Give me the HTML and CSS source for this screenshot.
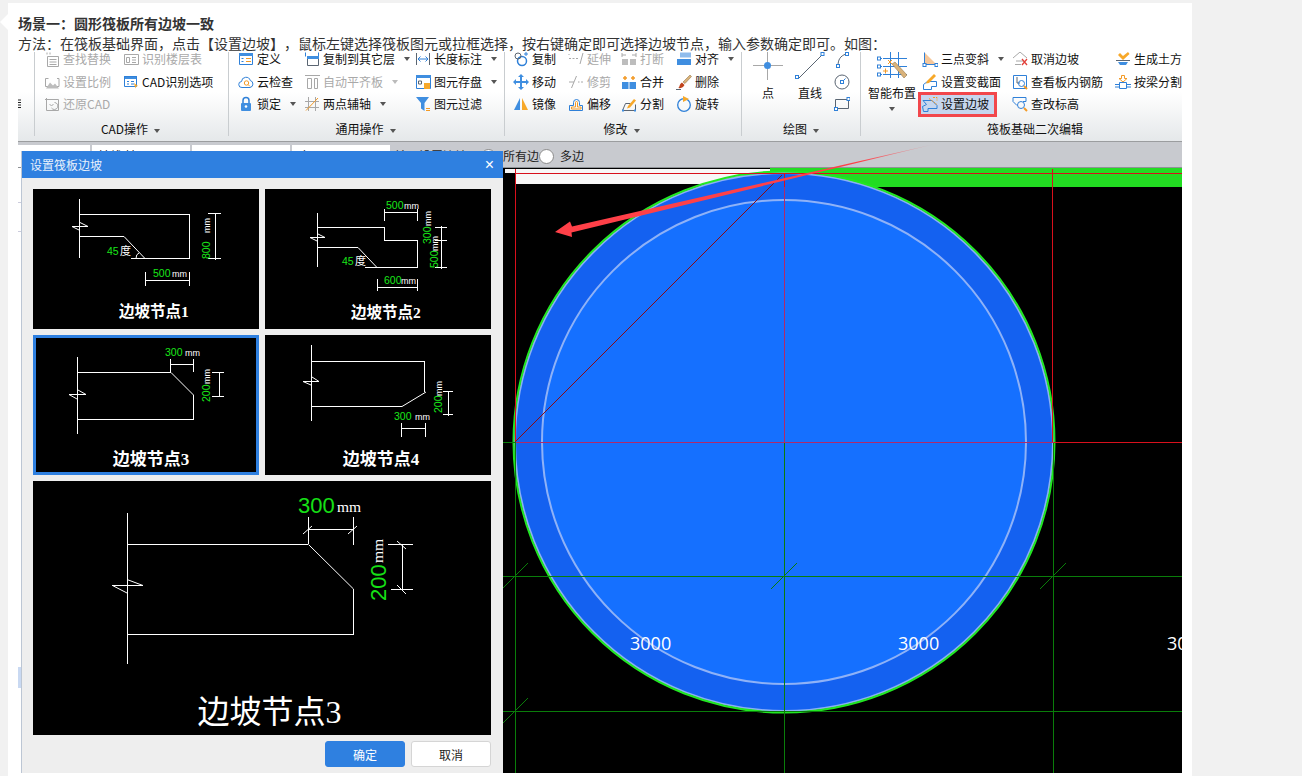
FILE: index.html
```html
<!DOCTYPE html>
<html lang="zh-CN">
<head>
<meta charset="utf-8">
<title>设置筏板边坡</title>
<link rel="stylesheet" href="styles.css">
</head>
<body>
<main class="card">
  <h1 class="title">场景一：圆形筏板所有边坡一致</h1>
  <p class="para">方法：在筏板基础界面，点击【设置边坡】，鼠标左键选择筏板图元或拉框选择，按右键确定即可选择边坡节点，输入参数确定即可。如图：</p>
  <div class="shot">
    <section class="ribbon">
      <div class="group stub"><svg class="stubicon" viewBox="0 0 4 10"><path d="M0 1h3M0 3.500h3M0 6h3M0 8.500h3"/></svg></div>

      <div class="group cad">
        <div class="rows">
          <div class="it off"><svg class="ic" viewBox="0 0 16 16"><path class="gr" d="M3.500 5.500h11v10h-11zM5.500 8.500h7M5.500 11h7M5.500 13.500h7M3 1.500v2M6 1.500v2"/></svg>查找替换</div>
          <div class="it off"><svg class="ic" viewBox="0 0 16 16"><path class="gr" d="M1.500 4.500h3M1.500 12.500h3M13 4.500h2M13 12.500h2M1.500 4.500v8M15 4.500v8"/><path class="gf" d="M2 14.500l4-6 3 3 2-2 4 5z"/></svg>设置比例</div>
          <div class="it off"><svg class="ic" viewBox="0 0 16 16"><path class="gr" d="M2.500 3.500h12v11h-12zM1 3.500h3M2.500 2v3M10.500 6.500a3.500 3.500 0 1 1-3 5.500M5.500 8l2 2 2-2"/></svg>还原CAD</div>
          <div class="it off"><svg class="ic" viewBox="0 0 16 16"><path class="gr" d="M1.500 3.500h14v10h-14zM9 6.500h4M9 9h4M9 11.500h4M3.500 6.500h3v5h-3z"/></svg>识别楼层表</div>
          <div class="it"><svg class="ic" viewBox="0 0 16 16"><rect class="bf" x="1" y="2" width="13" height="3"/><path class="bl" d="M1.500 2.500h12v10h-12z"/><path class="bl" d="M4 7.500h2M4 10h2M8 7.500h3M8 10h3"/><path class="of" d="M11 9l4 3-2 .6-.7 2z"/></svg>CAD识别选项</div>
        </div>
        <div class="glabel">CAD操作<i class="caret"></i></div>
      </div>

      <div class="group com">
        <div class="rows">
          <div class="it"><svg class="ic" viewBox="0 0 16 16"><path class="bl" d="M1.500 2.500h13v11h-13z"/><rect class="bf" x="1" y="2" width="14" height="3"/><path class="or" d="M8 7.500h5M8 10.500h5"/><path class="bl" d="M3.500 7.500h2M3.500 10.500h2"/></svg>定义</div>
          <div class="it"><svg class="ic" viewBox="0 0 16 16"><path class="bl" d="M4 13.500a3 3 0 0 1-.5-6 4.500 4.500 0 0 1 8.800-1 3.600 3.600 0 0 1-.3 7z"/><circle class="or" cx="8.500" cy="9" r="2.200"/><path class="or" d="M10 10.500l1.800 1.800"/></svg>云检查</div>
          <div class="it"><svg class="ic" viewBox="0 0 16 16"><path class="bl" d="M5 7V4.500a3 3 0 0 1 6 0V7" stroke-width="1.500"/><rect class="bf" x="3" y="7" width="10" height="8" rx="1"/><circle class="wf" cx="8" cy="10.500" r="1.300"/></svg>锁定<i class="caret"></i></div>
          <div class="it"><svg class="ic" viewBox="0 0 16 16"><path class="bl" d="M1.500 1.500v4M14.500 1.500v4"/><path class="da" d="M3.500 5.500h11v9h-11z"/><rect class="bf" x="3" y="5" width="12" height="3"/></svg>复制到其它层<i class="caret"></i></div>
          <div class="it off"><svg class="ic" viewBox="0 0 16 16"><path class="gr" d="M1 1.500h15M3.500 4.500h4v10h-4zM10.500 4.500h3v10h-3z"/></svg>自动平齐板<i class="caret"></i></div>
          <div class="it"><svg class="ic" viewBox="0 0 16 16"><path class="gr" d="M4.500 1v14M11.500 1v14M1 5.500h14M1 11.500h14"/><path class="or" d="M2 14.500L14 2"/></svg>两点辅轴<i class="caret"></i></div>
          <div class="it"><svg class="ic" viewBox="0 0 16 16"><path class="da" d="M1.500 2v12M14.500 2v12"/><path class="bl" d="M3 8h10M5.500 5.500L3 8l2.500 2.500M10.500 5.500L13 8l-2.500 2.500"/></svg>长度标注<i class="caret"></i></div>
          <div class="it"><svg class="ic" viewBox="0 0 16 16"><path class="bl" d="M1.500 1.500h14v13h-14z"/><rect class="bf" x="1" y="1" width="15" height="3"/><path class="da" d="M3.500 7h3v3h-3z"/><rect class="of" x="9" y="9" width="6" height="6"/></svg>图元存盘<i class="caret"></i></div>
          <div class="it"><svg class="ic" viewBox="0 0 16 16"><path class="bf" d="M1 1h13L9.500 7v8L6 12.500V7z"/><path class="or" d="M11 12.500h4M11 14.500h4"/></svg>图元过滤</div>
        </div>
        <div class="glabel">通用操作<i class="caret"></i></div>
      </div>

      <div class="group mod">
        <div class="rows">
          <div class="it"><svg class="ic" viewBox="0 0 16 16"><circle class="bl" cx="9" cy="10" r="4.500" stroke-width="1.500"/><circle class="da" cx="5" cy="5" r="3"/><path class="bl" d="M13 1v4M11 3h4"/></svg>复制</div>
          <div class="it"><svg class="ic" viewBox="0 0 16 16"><path class="bf" d="M8 0l3 3H9v4h4V5l3 3-3 3V9H9v4h2l-3 3-3-3h2V9H3v2L0 8l3-3v2h4V3H5z"/></svg>移动</div>
          <div class="it"><svg class="ic" viewBox="0 0 16 16"><path class="bf" d="M7 2v12H1z"/><path class="of" d="M9 2v12h6z"/></svg>镜像</div>
          <div class="it off"><svg class="ic" viewBox="0 0 16 16"><path class="gr" d="M1 7.500h2M4.500 7.500h2M8 7.500h2M12 13L15 2M1 3v1"/></svg>延伸</div>
          <div class="it off"><svg class="ic" viewBox="0 0 16 16"><path class="gr" d="M1 8h5M10 8h1.500M13 8h2M3.500 14L8.500 2"/></svg>修剪</div>
          <div class="it"><svg class="ic" viewBox="0 0 16 16"><path class="bl" d="M1.500 14.500v-5h4v-3a3 3 0 0 1 6 0v3h3v5z"/><path class="or" d="M3.500 13v-2h4V6.500a1 1 0 0 1 2 0V11h3.500v2z"/></svg>偏移</div>
          <div class="it off"><svg class="ic" viewBox="0 0 16 16"><rect class="gf" x="1" y="8" width="6" height="6"/><rect class="gf" x="9" y="8" width="6" height="6"/><path class="gr" d="M1 4h4M1 2v4M15 4h-4M15 2v4"/></svg>打断</div>
          <div class="it"><svg class="ic" viewBox="0 0 16 16"><rect class="bf" x="1" y="8" width="6.500" height="7"/><rect class="bf" x="8.500" y="8" width="6.500" height="7"/><path class="or" d="M4 2v4M2 4h4M12 2v4M10 4h4" stroke-width="1.500"/></svg>合并</div>
          <div class="it"><svg class="ic" viewBox="0 0 16 16"><path class="da" d="M1.500 14.500l3-7h5M1.500 14.500h13v-6"/><path class="of" d="M7 10l6-7 2 1.500-6 7-3 1z"/><rect class="bf" x="1" y="13.500" width="2" height="2"/><rect class="bf" x="13" y="13.500" width="2" height="2"/></svg>分割</div>
          <div class="it"><svg class="ic" viewBox="0 0 16 16"><rect class="bf" x="1" y="8" width="14" height="6"/><rect class="lf" x="4" y="1.500" width="11" height="5"/></svg>对齐<i class="caret"></i></div>
          <div class="it"><svg class="ic" viewBox="0 0 16 16"><path class="tan" d="M7 8L14 1l1.500 1.500L9 9.500z"/><path class="rdf" d="M2 14c2-.5 1-4 4-5.500L8.500 11C7 14 4 14.500 2 14z"/><path class="da" d="M0 15.500h5"/></svg>删除</div>
          <div class="it"><svg class="ic" viewBox="0 0 16 16"><circle class="bl" cx="8" cy="9" r="6.300" stroke-width="1.300"/><path class="of" d="M7 0l6 3-6 3z"/></svg>旋转</div>
        </div>
        <div class="glabel">修改<i class="caret"></i></div>
      </div>

      <div class="group draw">
        <div class="flexbody">
          <div class="big pt"><svg class="bigic" viewBox="0 0 30 30"><path class="gr" d="M0 13.500h30M14.500 0v28"/><circle class="bf" cx="14.500" cy="13.500" r="3.500"/></svg><span>点</span></div>
          <div class="big lnb"><svg class="bigic" viewBox="0 0 30 30"><path class="da" d="M3 27L27 3"/><rect class="wb" x="0.500" y="23.500" width="3" height="3"/><rect class="wb" x="26" y="0.500" width="3" height="3"/></svg><span>直线</span></div>
          <div class="smalls">
            <svg class="ic" viewBox="0 0 16 16"><path class="da" d="M4 14C4 8 6 4 12 2"/><rect class="wb" x="2.500" y="12.500" width="3" height="3"/><rect class="wb" x="11.500" y="0.500" width="3" height="3"/></svg>
            <svg class="ic" viewBox="0 0 16 16"><circle class="da" cx="8" cy="8" r="7"/><rect class="wb" x="6.500" y="6.500" width="3" height="3"/><path class="bl" d="M9.500 6.500l2-2"/></svg>
            <svg class="ic" viewBox="0 0 16 16"><path class="da" d="M1.500 4.500h13v9h-13z"/><rect class="wb" x="0.500" y="12.500" width="3" height="3"/><rect class="wb" x="13" y="2.500" width="3" height="3"/></svg>
          </div>
        </div>
        <div class="glabel">绘图<i class="caret"></i></div>
      </div>

      <div class="group raft">
        <div class="flexbody">
          <div class="big smart"><svg class="bigic" viewBox="0 0 30 30"><path class="bl" d="M6 6.500h24M6 14.500h24M6 22.500h24M13.500 0v26M21.500 0v26M3 6.500h2M3 14.500h2M3 22.500h2"/><rect class="wb" x="0.500" y="5" width="3" height="3"/><rect class="wb" x="0.500" y="13" width="3" height="3"/><rect class="wb" x="0.500" y="21" width="3" height="3"/><path class="or" d="M11 8l4 4M15 8l-4 4M6 19h5M8.500 16.500v5"/><path class="tan" d="M15 12l3-2 12 13-3 3z"/></svg><span>智能布置</span><i class="caret solo"></i></div>
          <div class="rows r3">
            <div class="it"><svg class="ic" viewBox="0 0 16 16"><path class="lof" d="M2.500 1.500v12h12z"/><path class="bl" d="M2.500 1.500v12h12"/><rect class="wb" x="1" y="12.500" width="3" height="3"/><rect class="wb" x="13" y="12.500" width="3" height="3"/></svg>三点变斜<i class="caret"></i></div>
            <div class="it"><svg class="ic" viewBox="0 0 16 16"><path class="bl" d="M1.500 15.500v-5l4-3h9v5h-5v3z"/><path class="of" d="M5 7L12 0l2 2-7 7-3 .5z"/></svg>设置变截面</div>
            <div class="it hl"><svg class="ic" viewBox="0 0 16 16"><path class="bl" d="M1 4.500h9l5 5v3H6v3H1.500l-1-5 4-2z"/><path class="or" d="M7 2.500l8 6M11 1.500h4v3" stroke-dasharray="2 1"/></svg>设置边坡</div>
            <div class="it"><svg class="ic" viewBox="0 0 16 16"><path class="gr" d="M1 7l7-6 7 6M4 10h8M3 13.500h6"/><path class="rd" d="M10 8l5 6M15 8l-5 6" stroke-width="1.300"/></svg>取消边坡</div>
            <div class="it"><svg class="ic" viewBox="0 0 16 16"><path class="bl" d="M1.500 1.500h13v13h-13z"/><path class="da" d="M5 3v6h3"/><circle class="bl" cx="9.500" cy="9.500" r="3"/><path class="or" d="M12 12l3 3" stroke-width="2"/></svg>查看板内钢筋</div>
            <div class="it"><svg class="ic" viewBox="0 0 16 16"><path class="bl" d="M1 1.500h13v4h-3M1 1.500v4l4 4"/><circle class="bl" cx="9" cy="9" r="3.500"/><path class="or" d="M12 12l3 3" stroke-width="2"/></svg>查改标高</div>
            <div class="it"><svg class="ic" viewBox="0 0 16 16"><path class="of" d="M3 4l2-2 3 3 5-4 1.500 2L8 9z"/><path class="da" d="M1 9.500h14"/><path class="bf" d="M3 11h10l-2 3H5z"/></svg>生成土方</div>
            <div class="it"><svg class="ic" viewBox="0 0 16 16"><path class="or" d="M6.500 1.500h3v3H12l-4 3.500-4-3.500h2.500z"/><path class="bl" d="M4.500 8.500h7v6h-7zM0 10.500h4.500M11.500 10.500H16M0 13h4.500M11.500 13H16"/></svg>按梁分割</div>
          </div>
        </div>
        <div class="glabel raftlabel">筏板基础二次编辑</div>
      </div>
    </section>

    <section class="toolbar">
      <span class="field first"></span>
      <span class="field">轴线 轴网</span>
      <span class="field"></span>
      <span class="field">底层</span>
      <span class="tbtext hint">输入设置边坡</span>
      <i class="radio ra"></i>
      <span class="tbtext all">所有边</span>
      <i class="radio rb"></i>
      <span class="tbtext many">多边</span>
    </section>

    <section class="work">
      <aside class="side">
        <i class="mark m1"></i>
        <i class="mark m2"></i>
        <i class="mark m3"></i>
      </aside>
      <svg class="canvas" viewBox="503 168 679 605">
        <rect class="c-white" x="505" y="169" width="265" height="4"/>
        <rect class="c-white" x="515" y="173" width="268" height="11"/>
        <rect class="c-green" x="770" y="168" width="412" height="5"/>
        <rect class="c-green" x="783" y="173" width="399" height="14"/>
        <circle class="c-outer" cx="784" cy="442" r="269"/>
        <circle class="c-rim" cx="784" cy="442" r="270.500"/>
        <circle class="c-inner" cx="784" cy="442" r="242"/>
        <path class="c-grid" d="M503 576.500H1182M503 711.500H1182M515.500 442V773M784.500 442V773M1053.500 442V773M503 442.500H515M502 589l26-26M771 589l26-26M1040 589l26-26M502 724l26-26"/>
        <path class="c-red" d="M515.500 169V442M1052.500 169V442M515 173.500H1182M1054 442.500H1182M784.500 173V187"/>
        <path class="c-mix" d="M516 442.500H1054M784.500 187V442"/>
        <path class="c-dia" d="M515 442L782 175"/>
        <text class="c-num" x="630" y="650">3000</text>
        <text class="c-num" x="898" y="650">3000</text>
        <text class="c-num" x="1167" y="650">3000</text>
      </svg>
    </section>

    <svg class="arrow" viewBox="18 52 1164 721">
      <defs>
        <linearGradient id="fade" gradientUnits="userSpaceOnUse" x1="935" y1="144" x2="860" y2="161">
          <stop offset="0" stop-color="#ff4048" stop-opacity="0.100"/>
          <stop offset="1" stop-color="#ff4048"/>
        </linearGradient>
      </defs>
      <path fill="url(#fade)" d="M935 144L572 226.500 570 221.500 555 232 572 237 571.500 232.500Z"/>
    </svg>

    <div class="dialog">
      <header class="dhead"><span>设置筏板边坡</span><b class="close">×</b></header>
      <div class="dbody">
        <div class="thumbs">
          <div class="thumb">
            <svg viewBox="0 0 226 140">
              <path class="ln" d="M46.500 10V69M46 25.500H157M156.500 25V70M98 69.500H157M46 47.500H91M175 24.500H188M175 69.500H188M182.500 24V71M112.500 83V97M156.500 83V97M112 91.500H157M39 37.500H55"/>
              <path class="ln" d="M91 47.500L112 69.500M39 37.500L46 41M47 33.500L55 37.500M103 69.500Q103 65 106 64"/>
              <text class="tg" x="74" y="66">45</text><text class="tw cjk" x="87" y="66">度</text>
              <text class="tg" x="120" y="88">500</text><text class="tw" x="139" y="88">mm</text>
              <text class="tg" transform="translate(176.500 70) rotate(-90)" x="0" y="0">800</text>
              <text class="tw" transform="translate(176.500 44) rotate(-90)" x="0" y="0">mm</text>
              <text class="cap" x="121" y="128">边坡节点1</text>
            </svg>
          </div>
          <div class="thumb">
            <svg viewBox="0 0 226 140">
              <path class="ln" d="M52.500 24V78M52 38.500H119M119.500 38V51M119 51.500H153M152.500 51V79M100 78.500H153M52 58.500H93M119.500 20V32M152.500 20V32M119 23.500H153M170 38.500H182M170 51.500H182M170 78.500H182M176.500 37V80M112.500 90V102M152.500 90V102M112 98.500H153M45 48.500H60"/>
              <path class="ln" d="M93 58.500L112 78.500M45 48.500L52 52M53 45L60 48.500"/>
              <text class="tg" x="121" y="20">500</text><text class="tw" x="139" y="20">mm</text>
              <text class="tg" x="119" y="95">600</text><text class="tw" x="136" y="95">mm</text>
              <text class="tg" transform="translate(165.500 55) rotate(-90)" x="0" y="0">300</text>
              <text class="tw" transform="translate(165.500 37) rotate(-90)" x="0" y="0">mm</text>
              <text class="tg" transform="translate(172.500 79) rotate(-90)" x="0" y="0">500</text>
              <text class="tw" transform="translate(172.500 62) rotate(-90)" x="0" y="0">mm</text>
              <text class="tg" x="77" y="76">45</text><text class="tw cjk" x="90" y="76">度</text>
              <text class="cap" x="121" y="129">边坡节点2</text>
            </svg>
          </div>
          <div class="thumb sel">
            <svg viewBox="0 0 226 140">
              <path class="ln" d="M44.500 22V99M44 37.500H138M160.500 60V85M44 84.500H161M137.500 24V37M160.500 24V37M137 29.500H161M179 37.500H191M179 61.500H191M186.500 37V62M36 59.500H53"/>
              <path class="ln" d="M138 37.500L160.500 60M36 59.500L44 64M45 55L53 59.500"/>
              <text class="tg" x="132" y="21">300</text><text class="tw" x="152" y="21">mm</text>
              <text class="tg" transform="translate(177 67) rotate(-90)" x="0" y="0">200</text>
              <text class="tw" transform="translate(177 49) rotate(-90)" x="0" y="0">mm</text>
              <text class="cap large" x="118" y="130">边坡节点3</text>
            </svg>
          </div>
          <div class="thumb">
            <svg viewBox="0 0 226 140">
              <path class="ln" d="M46.500 10V86M46 26.500H160M159.500 26V57M46 71.500H137M178 56.500H188M178 79.500H188M183.500 56V81M136.500 88V102M160.500 88V102M136 93.500H161M38 46.500H54"/>
              <path class="ln" d="M137 71.500L161 57M38 46.500L46 50M47 42L54 46.500"/>
              <text class="tg" x="129" y="85">300</text><text class="tw" x="150" y="85">mm</text>
              <text class="tg" transform="translate(177 78) rotate(-90)" x="0" y="0">200</text>
              <text class="tw" transform="translate(177 61) rotate(-90)" x="0" y="0">mm</text>
              <text class="cap large" x="116" y="130">边坡节点4</text>
            </svg>
          </div>
        </div>
        <div class="preview">
          <svg viewBox="0 0 458 254">
            <path class="ln" d="M94.500 32V183M94 63.500H275M320.500 108V154M94 153.500H321M275.500 36V63M320.500 36V64M275 48.500H321M355 63.500H380M358 108.500H380M369.500 63V109M79 104.500H110"/>
            <path class="ln" d="M275.500 63.500L320.500 108M79.500 104.500L94 112M94 98.500L110 104.500M270 53L279 45M315 53L324 45M364 60L373 68M364 104L373 113"/>
            <text class="pg" x="265" y="32">300</text>
            <text class="pw" x="304" y="31">mm</text>
            <text class="pg" transform="translate(353 120) rotate(-90)" x="0" y="0">200</text>
            <text class="pw" transform="translate(350 82) rotate(-90)" x="0" y="0">mm</text>
            <text class="pcap" x="236.500" y="242">边坡节点3</text>
          </svg>
        </div>
        <div class="dfoot">
          <button class="btn primary" type="button">确定</button>
          <button class="btn" type="button">取消</button>
        </div>
      </div>
    </div>
  </div>
</main>
</body>
</html>
```

FILE: styles.css
```css
html, body { margin: 0; padding: 0; }
body {
  background: #f1f1f1;
  width: 1302px;
  height: 776px;
  overflow: hidden;
  font-family: "Noto Sans CJK SC", "Liberation Sans", sans-serif;
  color: #222;
  text-spacing-trim: space-all;
  font-feature-settings: "chws" 0, "palt" 0;
}
.card {
  position: relative;
  margin: 3px 0 0 8px;
  width: 1184px;
  height: 773px;
  box-sizing: border-box;
  padding: 10px 10px 0;
  background: #fff;
}
.card::before {
  content: "";
  position: absolute;
  left: -8px;
  top: 11px;
  width: 8px;
  height: 16px;
  background: #fff;
  clip-path: polygon(100% 0, 0 50%, 100% 100%);
}
.title { margin: 0; font-size: 14px; line-height: 20px; font-weight: 700; color: #333; }
.para { margin: 1px 0 0; font-size: 14px; line-height: 18px; color: #333; white-space: nowrap; }

.shot { position: relative; width: 1164px; height: 721px; overflow: hidden; background: #fff; }

/* ribbon */
.ribbon {
  display: flex;
  height: 89px;
  overflow: hidden;
  box-sizing: border-box;
  background: linear-gradient(#fff 0, #fff 45%, #e5e8ea 100%);
  font-size: 12px;
  color: #111;
}
.group { position: relative; flex: none; box-sizing: border-box; }
.group::before {
  content: "";
  position: absolute;
  left: 0;
  top: 0;
  bottom: 5px;
  width: 1px;
  background: #c9cdd0;
}
.stub::before { display: none; }
.stub { width: 16px; }
.stubicon { position: absolute; left: 0; top: 47px; width: 4px; height: 10px; }
.stubicon path { stroke: #222; fill: none; }
.cad { width: 194px; padding-left: 10px; }
.com { width: 276px; padding-left: 10px; }
.mod { width: 237px; padding-left: 9px; }
.draw { width: 119px; padding-left: 12px; }
.raft { width: 322px; padding-left: 8px; }

.rows {
  display: grid;
  grid-auto-flow: column;
  grid-template-rows: repeat(3, 22.5px);
  height: 68px;
  margin-top: -4px;
}
.cad .rows { grid-template-columns: 79px 1fr; }
.com .rows { grid-template-columns: 66px 111px 1fr; }
.mod .rows { grid-template-columns: 55px 53px 55px 1fr; }
.r3 { grid-template-columns: 90px 103px 1fr; margin-left: 6px; }
.flexbody { display: flex; height: 64px; }

.it { display: flex; align-items: center; gap: 3px; white-space: nowrap; line-height: 16px; }
.it.off { color: #a9a9a9; }
.ic { flex: none; width: 16px; height: 16px; }
.caret {
  display: inline-block;
  flex: none;
  width: 0;
  height: 0;
  margin-left: 6px;
  border: 3.5px solid transparent;
  border-top: 4px solid #555;
  border-bottom: 0;
  vertical-align: middle;
}
.it.off .caret { border-top-color: #bbb; }
.hl {
  justify-self: start;
  align-self: center;
  height: 19px;
  width: 73px;
  background: #c6d6ee;
  outline: 3px solid #f2474c;
  outline-offset: 0;
  margin-left: -1px;
  padding-left: 1px;
  box-sizing: border-box;
}
.glabel { margin-top: 6px; height: 14px; line-height: 14px; text-align: center; font-size: 12px; color: #111; }
.cad .glabel, .com .glabel, .mod .glabel, .draw .glabel { margin-left: -11px; }
.raftlabel { padding-left: 20px; }

.big { flex: none; display: flex; flex-direction: column; align-items: center; }
.bigic { width: 30px; height: 30px; flex: none; }
.big span { margin-top: 3px; line-height: 16px; white-space: nowrap; }
.pt, .lnb { width: 30px; }
.lnb { margin-left: 12px; }
.smart { width: 48px; }
.caret.solo { margin: 6px 0 0; }
.smalls { margin: 0 0 0 9px; display: flex; flex-direction: column; gap: 5.500px; }

/* icon paints */
.ic path, .ic circle, .ic rect, .bigic path, .bigic circle, .bigic rect { fill: none; }
.ic .bl, .bigic .bl { stroke: #2f80d8; }
.ic .or, .bigic .or { stroke: #f39a26; }
.ic .gr, .bigic .gr { stroke: #a8a8a8; }
.ic .da, .bigic .da { stroke: #5a6572; }
.ic .rd { stroke: #e2403a; }
.ic .bf, .bigic .bf { fill: #3f8ee0; }
.ic .lf { fill: #8fbcec; }
.ic .of { fill: #f7a829; }
.ic .lof { fill: #f6c79a; }
.ic .gf { fill: #bdbdbd; }
.ic .wf { fill: #fff; }
.ic .tan, .bigic .tan { fill: #d9b27a; stroke: #8a6a3a; stroke-width: 0.500; }
.ic .rdf { fill: #c0431c; }
.ic .wb, .bigic .wb { fill: #fff; stroke: #2f80d8; }

/* toolbar */
.toolbar {
  position: relative;
  display: flex;
  align-items: flex-start;
  height: 27px;
  box-sizing: border-box;
  padding-top: 3px;
  background: #c8cacf;
  border-top: 1px solid #9b9d9f;
  border-bottom: 1px solid #8f9296;
  font-size: 12px;
  color: #222;
}
.field {
  flex: none;
  width: 98px;
  height: 22px;
  margin-right: 2px;
  padding-left: 6px;
  box-sizing: border-box;
  background: #fff;
  line-height: 22px;
}
.field.first { width: 72px; }
.tbtext { flex: none; line-height: 22px; white-space: nowrap; color: #222; }
.hint { margin-left: 3px; width: 83px; }
.radio {
  flex: none;
  width: 13px;
  height: 13px;
  margin-top: 4px;
  border: 1px solid #8b8b8b;
  border-radius: 50%;
  background: #fff;
}
.ra { margin-left: 3px; }
.all { margin-left: 7px; width: 36px; }
.many { margin-left: 6px; }

/* work area */
.work { display: flex; height: 605px; }
.side { position: relative; flex: none; width: 485px; background: #fff; }
.mark { position: absolute; left: 0; width: 3px; }
.m1 { top: 34px; height: 1px; background: #ccd; }
.m2 { top: 63px; height: 1px; background: #ccd; }
.m3 { top: 499px; height: 21px; background: #c9d9f2; }
.canvas { flex: none; display: block; width: 679px; height: 605px; background: #000; }
.c-white { fill: #f7f7f7; }
.c-green { fill: #22dc22; }
.c-outer { fill: #1461f0; stroke: #8ab0f5; stroke-width: 2; }
.c-rim { fill: none; stroke: #22e622; stroke-width: 2; }
.c-inner { fill: #1570ff; stroke: #8fb2f7; stroke-width: 2; }
.c-grid { fill: none; stroke: #0a7d0a; stroke-width: 1; }
.c-red { fill: none; stroke: #d8101c; stroke-width: 1; }
.c-mix { fill: none; stroke: #b02a6a; stroke-width: 1; }
.c-dia { fill: none; stroke: #8c0a12; stroke-width: 1; }
.c-num { fill: #fff; font-family: "Open Sans", sans-serif; font-size: 18px; }
.arrow { position: absolute; left: 0; top: 0; width: 1164px; height: 721px; pointer-events: none; }

/* dialog */
.dialog {
  position: absolute;
  left: 3px;
  top: 99px;
  width: 482px;
  height: 622px;
  box-sizing: border-box;
  border-left: 1px solid #bcc6d4;
  background: #eee;
  display: flex;
  flex-direction: column;
}
.dhead {
  display: flex;
  flex: none;
  align-items: center;
  justify-content: space-between;
  height: 27px;
  padding: 0 9px 0 8px;
  background: #2f80e0;
  color: #e9f1fc;
  font-size: 12px;
}
.close { font-size: 16px; font-weight: 400; font-family: "Liberation Sans", sans-serif; color: #fff; line-height: 1; }
.dbody { flex: none; padding: 11px 12px 0 11px; }
.thumbs { display: grid; grid-template-columns: 226px 226px; grid-auto-rows: 140px; gap: 6px; }
.thumb { position: relative; background: #000; }
.thumb svg, .preview svg { display: block; width: 100%; height: 100%; }
.thumb.sel { outline: 3px solid #2f80e0; outline-offset: -3px; }
.preview { width: 458px; height: 254px; margin-top: 6px; background: #000; }
.ln { fill: none; stroke: #fff; stroke-width: 1; }
.tg { fill: #19e619; font: 10.500px "Liberation Sans", sans-serif; }
.tw { fill: #fff; font: 9px "Liberation Sans", sans-serif; }
.tw.cjk { font: 11px "Noto Sans CJK SC", sans-serif; }
.cap {
  fill: #fff;
  font: 700 15.500px "Liberation Serif", "Noto Sans CJK SC", serif;
  text-anchor: middle;
}
.cap.large { font-size: 17px; }
.pg { fill: #16e016; font: 22px "Liberation Sans", sans-serif; }
.pw { fill: #fff; font: 15.500px "Liberation Serif", serif; }
.pcap {
  fill: #fff;
  font: 32px "Liberation Serif", "Noto Sans CJK SC", serif;
  text-anchor: middle;
}
.dfoot { display: flex; justify-content: flex-end; gap: 6px; margin-top: 6px; }
.btn {
  width: 80px;
  height: 26px;
  padding: 0;
  box-sizing: border-box;
  border: 1px solid #d5d5d5;
  border-radius: 3px;
  background: #fff;
  color: #222;
  font: 12px "Noto Sans CJK SC", sans-serif;
}
.btn.primary { background: #2f80e0; border-color: #2f80e0; color: #fff; }
```
